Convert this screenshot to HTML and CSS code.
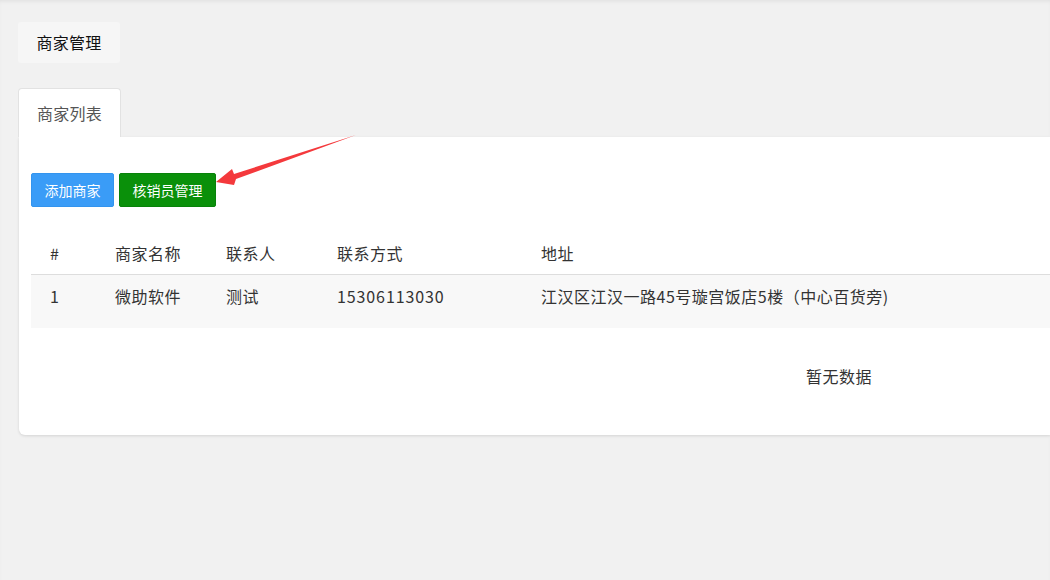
FILE: index.html
```html
<!DOCTYPE html>
<html lang="zh">
<head>
<meta charset="utf-8">
<title>商家管理</title>
<link rel="stylesheet" href="styles.css">
</head>
<body>
<div class="page">
  <div class="crumb">商家管理</div>
  <div class="tabs"><div class="tab">商家列表</div></div>
  <div class="panel">
    <div class="actions">
      <button class="btn btn-blue">添加商家</button>
      <button class="btn btn-green">核销员管理</button>
    </div>
    <div class="table">
      <div class="row head">
        <div>#</div><div>商家名称</div><div>联系人</div><div>联系方式</div><div>地址</div>
      </div>
      <div class="row body">
        <div>1</div><div>微助软件</div><div>测试</div><div class="num">15306113030</div><div>江汉区江汉一路45号璇宫饭店5楼（中心百货旁)</div>
      </div>
      <div class="empty">暂无数据</div>
    </div>
  </div>
</div>
<svg class="arrow" width="1050" height="580" viewBox="0 0 1050 580">
  <polygon points="216,182 232,169 234,174 356,135 236,179 234,185" fill="#f4393c"/>
</svg>
</body>
</html>
```
FILE: styles.css
```css
html, body {
  margin: 0;
  padding: 0;
  width: 1050px;
  height: 580px;
  overflow: hidden;
}
body {
  background: #f1f1f1;
  font-family: "Microsoft YaHei", "Noto Sans CJK SC", "Noto Sans", sans-serif;
  color: #333;
  position: relative;
  box-shadow: inset 0 3px 4px -2px rgba(0,0,0,0.08);
}
.page {
  padding: 22px 0 0 18px;
}
.crumb {
  display: inline-block;
  background: #f6f6f6;
  width: 102px;
  height: 41px;
  line-height: 41px;
  text-align: center;
  font-size: 16px;
  letter-spacing: 0.3px;
  color: #111;
  border-radius: 3px;
}
.tabs {
  margin-top: 25px;
  display: flex;
}
.tab {
  width: 101px;
  height: 48px;
  line-height: 48px;
  text-align: center;
  background: #fff;
  border: 1px solid #e2e2e2;
  border-bottom: none;
  border-radius: 4px 4px 0 0;
  font-size: 16px;
  letter-spacing: 0.3px;
  color: #555;
}
.panel {
  margin-left: 1px;
  width: 1031px;
  height: 298px;
  overflow: hidden;
  background: #fff;
  border-radius: 0 0 0 6px;
  box-shadow: 0 1px 3px rgba(0,0,0,0.12);
  padding: 36px 0 0 12px;
  box-sizing: border-box;
}
.actions {
  display: flex;
  gap: 5px;
}
.btn {
  height: 34px;
  border: 1px solid transparent;
  border-radius: 2px;
  color: #fff;
  font-family: inherit;
  font-size: 14px;
  padding: 0;
  cursor: pointer;
}
.btn-blue {
  width: 83px;
  background: #3a9cf7;
  border-color: #3394ee;
}
.btn-green {
  width: 97px;
  background: #0a900a;
  border-color: #08820a;
}
.table {
  margin-top: 26px;
  width: 1019px;
  font-size: 16px;
  letter-spacing: 0.5px;
  color: #333;
}
.row {
  display: grid;
  grid-template-columns: 84px 111px 111px 204px 1fr;
}
.row > div:first-child {
  padding-left: 19px;
}
.num {
  letter-spacing: 0.9px;
}
.head {
  height: 41px;
  line-height: 40px;
  border-bottom: 1px solid #dddddd;
}
.body {
  height: 53px;
  background: #f8f8f8;
  line-height: 20px;
  padding-top: 11px;
  box-sizing: border-box;
}
.empty {
  padding-top: 38px;
  padding-left: 775px;
  line-height: 20px;
}
.arrow {
  position: absolute;
  left: 0;
  top: 0;
  pointer-events: none;
}
```
